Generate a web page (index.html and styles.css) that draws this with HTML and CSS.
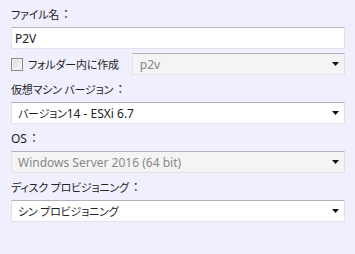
FILE: index.html
```html
<!DOCTYPE html>
<html lang="ja">
<head>
    <meta charset="UTF-8">
    <title>仮想マシン設定</title>
    <link rel="stylesheet" href="styles.css">
</head>
<body>
    <div class="panel">
        <div class="field">
            <label class="field-label" for="fileName"><span class="ja">ファイル名</span><span class="colon">：</span></label>
            <input class="text-input" type="text" id="fileName" value="P2V">
        </div>

        <div class="folder-row">
            <label class="check">
                <span class="check-box"></span>
                <span class="ja">フォルダー内に作成</span>
            </label>
            <div class="select disabled">
                <span class="select-value">p2v</span>
                <svg class="arrow" width="7" height="4" viewBox="0 0 7 4"><polygon points="0,0 7,0 3.5,4" fill="#111"/></svg>
            </div>
        </div>

        <div class="field">
            <div class="field-label"><span class="ja">仮想マシン&nbsp;バージョン</span><span class="colon">：</span></div>
            <div class="select">
                <span class="select-value"><span class="ja">バージョン</span>14 - ESXi 6.7</span>
                <svg class="arrow" width="7" height="4" viewBox="0 0 7 4"><polygon points="0,0 7,0 3.5,4" fill="#111"/></svg>
            </div>
        </div>

        <div class="field">
            <div class="field-label">OS<span class="colon">：</span></div>
            <div class="select disabled">
                <span class="select-value">Windows Server 2016 (64 bit)</span>
                <svg class="arrow" width="7" height="4" viewBox="0 0 7 4"><polygon points="0,0 7,0 3.5,4" fill="#111"/></svg>
            </div>
        </div>

        <div class="field">
            <div class="field-label"><span class="ja">ディスク&nbsp;プロビジョニング</span><span class="colon">：</span></div>
            <div class="select">
                <span class="select-value ja">シン&nbsp;プロビジョニング</span>
                <svg class="arrow" width="7" height="4" viewBox="0 0 7 4"><polygon points="0,0 7,0 3.5,4" fill="#111"/></svg>
            </div>
        </div>
    </div>
</body>
</html>
```

FILE: styles.css
```css
body {
    margin: 0;
    padding: 0;
    background-color: #efeffd;
    color: #222;
    font-family: "Noto Sans", "Noto Sans CJK JP", sans-serif;
    font-size: 12px;
}
.ja {
    font-size: 11px;
    letter-spacing: -0.2px;
    font-feature-settings: "palt";
}
.colon {
    font-family: "Noto Sans CJK JP", sans-serif;
    margin-left: 1px;
}
.panel {
    width: 334px;
    padding: 4px 0 0 11px;
}
.field-label {
    display: block;
    height: 20px;
    line-height: 20px;
    margin-bottom: 3px;
}
.text-input,
.select {
    box-sizing: border-box;
    height: 22px;
    border: 1px solid #e2e2ea;
    border-top-color: #b2b2bc;
    background-color: #fff;
    font: inherit;
    color: #222;
}
.text-input {
    display: block;
    width: 100%;
    margin: 0 0 4px;
    padding: 0 3px;
    outline: none;
}
.select {
    display: flex;
    align-items: center;
    justify-content: space-between;
    padding: 0 5px 0 6px;
    margin-bottom: 4px;
}
.select.disabled {
    background-color: #f4f4f4;
    color: #888;
}
.folder-row {
    display: flex;
    align-items: center;
    margin: 2px 0 4px;
}
.folder-row .select {
    flex: 1;
    margin: 0 0 0 13px;
    padding-left: 7px;
}
.check {
    display: flex;
    align-items: center;
    gap: 5px;
}
.check-box {
    box-sizing: border-box;
    width: 12px;
    height: 13px;
    border: 1px solid #8c8c8c;
    background: linear-gradient(135deg, #dcdcdc, #f8f8f8);
    box-shadow: inset 0 0 0 1px #f0f0f0;
}
.arrow {
    flex-shrink: 0;
}
```
